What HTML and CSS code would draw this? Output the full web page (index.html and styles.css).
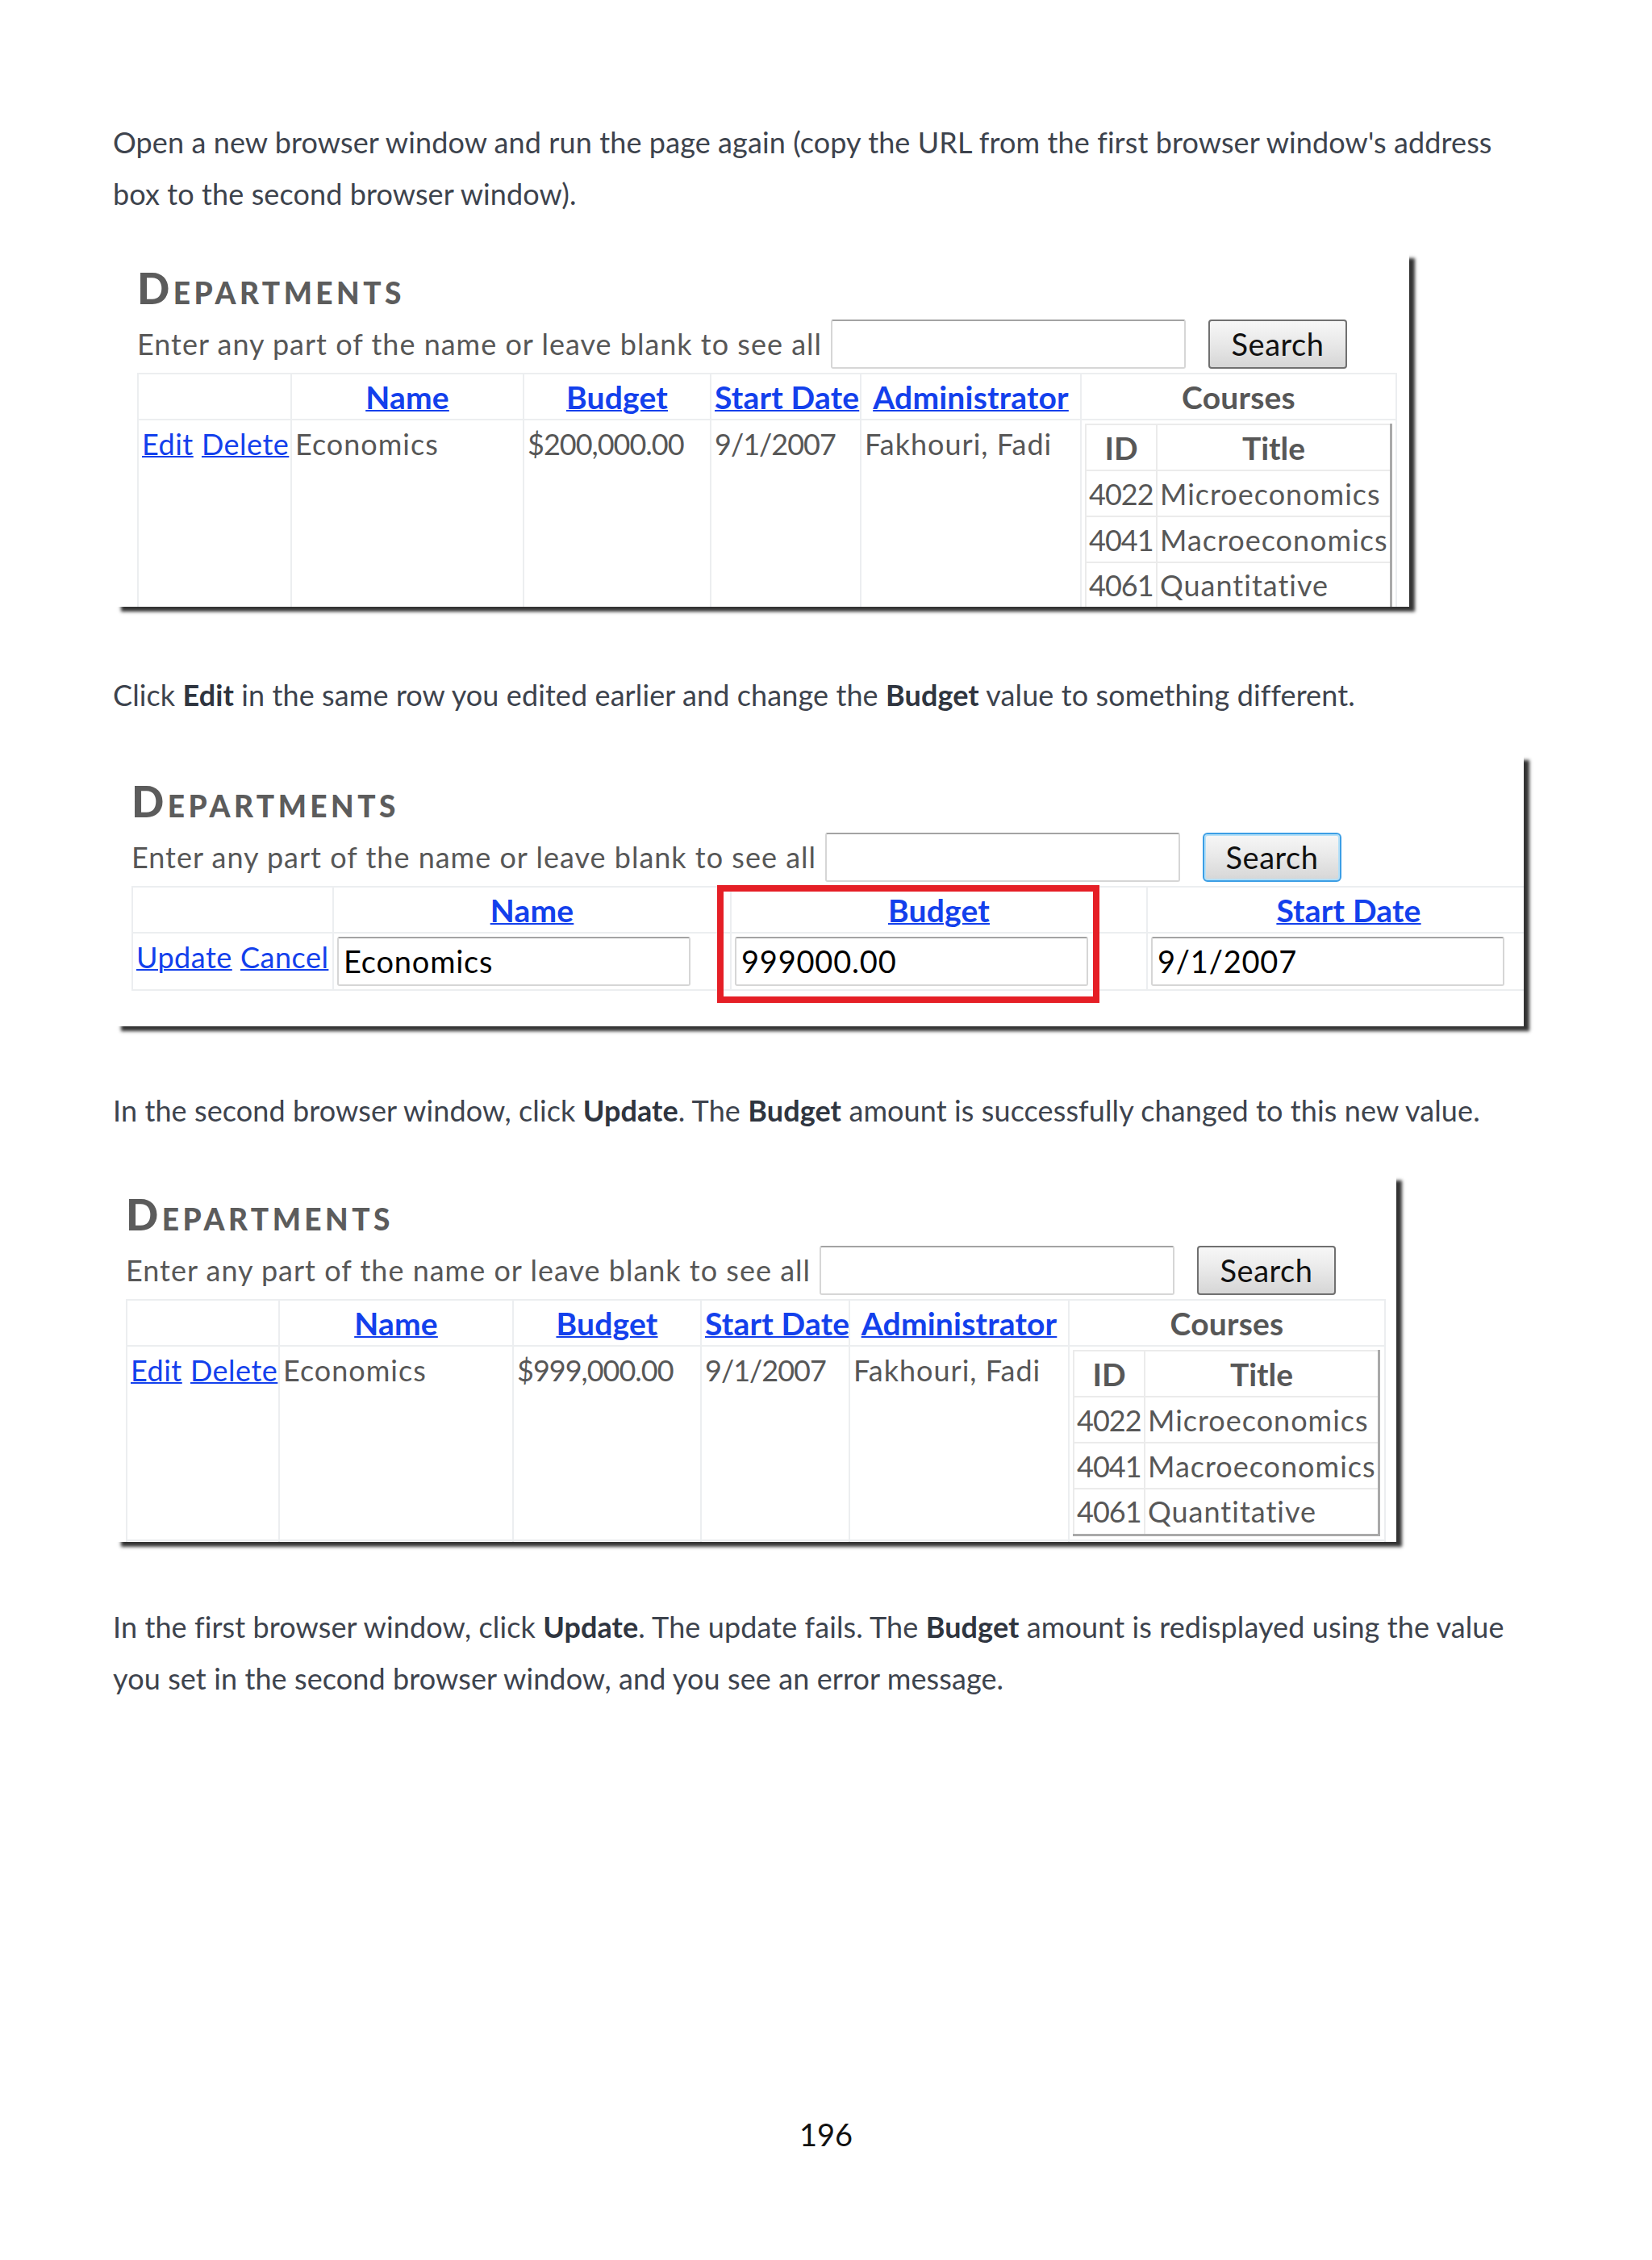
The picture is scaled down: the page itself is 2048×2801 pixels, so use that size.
FILE: index.html
```html
<!DOCTYPE html>
<html lang="en">

<head>
    <meta charset="UTF-8">
    <title>Departments - concurrency walkthrough</title>
    <link rel="stylesheet" href="styles.css">
</head>

<body>
    <main class="content">
        <p class="para">Open a new browser window and run the page again (copy the URL from the first browser window's address<br>box to the second browser window).</p>

        <div class="shot shot-1">
            <h2 class="dept">Departments</h2>
            <div class="search">
                <span class="search-label">Enter any part of the name or leave blank to see all</span>
                <span class="search-box"></span>
                <span class="search-btn">Search</span>
            </div>
            <table class="grid">
                <colgroup>
                    <col style="width:190px"><col style="width:288px"><col style="width:232px">
                    <col style="width:186px"><col style="width:273px"><col style="width:391px">
                </colgroup>
                <tr class="head">
                    <th></th>
                    <th><a href="#">Name</a></th>
                    <th><a href="#">Budget</a></th>
                    <th><a href="#">Start Date</a></th>
                    <th><a href="#">Administrator</a></th>
                    <th>Courses</th>
                </tr>
                <tr>
                    <td><a href="#">Edit</a> <a href="#">Delete</a></td>
                    <td>Economics</td>
                    <td class="num">$200,000.00</td>
                    <td class="num">9/1/2007</td>
                    <td>Fakhouri, Fadi</td>
                    <td>
                        <table class="courses">
                            <colgroup><col style="width:88px"><col></colgroup>
                            <tr><th>ID</th><th>Title</th></tr>
                            <tr><td class="num">4022</td><td>Microeconomics</td></tr>
                            <tr><td class="num">4041</td><td>Macroeconomics</td></tr>
                            <tr><td class="num">4061</td><td>Quantitative</td></tr>
                        </table>
                    </td>
                </tr>
            </table>
        </div>

        <p class="para">Click <b>Edit</b> in the same row you edited earlier and change the <b>Budget</b> value to something different.</p>

        <div class="shot shot-2">
            <h2 class="dept">Departments</h2>
            <div class="search">
                <span class="search-label">Enter any part of the name or leave blank to see all</span>
                <span class="search-box"></span>
                <span class="search-btn is-focused">Search</span>
            </div>
            <table class="grid">
                <colgroup>
                    <col style="width:249px"><col style="width:493px"><col style="width:516px"><col style="width:500px">
                </colgroup>
                <tr class="head">
                    <th></th>
                    <th><a href="#">Name</a></th>
                    <th><a href="#">Budget</a></th>
                    <th><a href="#">Start Date</a></th>
                </tr>
                <tr>
                    <td class="actions"><a href="#">Update</a> <a href="#">Cancel</a></td>
                    <td><span class="field">Economics</span></td>
                    <td><span class="field">999000.00</span></td>
                    <td><span class="field">9/1/2007</span></td>
                </tr>
            </table>
            <div class="callout"></div>
        </div>

        <p class="para">In the second browser window, click <b>Update</b>. The <b>Budget</b> amount is successfully changed to this new value.</p>

        <div class="shot shot-3">
            <h2 class="dept">Departments</h2>
            <div class="search">
                <span class="search-label">Enter any part of the name or leave blank to see all</span>
                <span class="search-box"></span>
                <span class="search-btn">Search</span>
            </div>
            <table class="grid">
                <colgroup>
                    <col style="width:189px"><col style="width:290px"><col style="width:233px">
                    <col style="width:184px"><col style="width:272px"><col style="width:392px">
                </colgroup>
                <tr class="head">
                    <th></th>
                    <th><a href="#">Name</a></th>
                    <th><a href="#">Budget</a></th>
                    <th><a href="#">Start Date</a></th>
                    <th><a href="#">Administrator</a></th>
                    <th>Courses</th>
                </tr>
                <tr>
                    <td><a href="#">Edit</a> <a href="#">Delete</a></td>
                    <td>Economics</td>
                    <td class="num">$999,000.00</td>
                    <td class="num">9/1/2007</td>
                    <td>Fakhouri, Fadi</td>
                    <td>
                        <table class="courses">
                            <colgroup><col style="width:88px"><col></colgroup>
                            <tr><th>ID</th><th>Title</th></tr>
                            <tr><td class="num">4022</td><td>Microeconomics</td></tr>
                            <tr><td class="num">4041</td><td>Macroeconomics</td></tr>
                            <tr><td class="num">4061</td><td>Quantitative</td></tr>
                        </table>
                    </td>
                </tr>
                <tr class="cut">
                    <td></td><td></td><td></td><td></td><td></td><td></td>
                </tr>
            </table>
        </div>

        <p class="para">In the first browser window, click <b>Update</b>. The update fails. The <b>Budget</b> amount is redisplayed using the value<br>you set in the second browser window, and you see an error message.</p>
    </main>

    <footer class="page-num">196</footer>
</body>

</html>
```

FILE: styles.css
```css
body {
    margin: 0;
    background: #fff;
    font-family: Lato, "Open Sans", sans-serif;
}

.content {
    padding: 144px 0 0 140px;
}

.para {
    margin: 0;
    font-size: 36px;
    line-height: 64px;
    letter-spacing: 0.1px;
    color: #3d434d;
}

.para b {
    color: #2f353f;
}

/* screenshot frames */
.shot {
    position: relative;
    box-sizing: border-box;
    margin: 42px 0 77px 3px;
    background: #fff;
    overflow: hidden;
    box-shadow: 7px 6px 4px rgba(0, 0, 0, 0.8);
    color: #575757;
    letter-spacing: 1px;
}

.shot-1 {
    width: 1604px;
    height: 438px;
    padding: 13px 0 0 27px;
}

.shot-1 .grid {
    width: 1560px;
}

.shot-2 {
    width: 1746px;
    height: 336px;
    padding: 27px 0 0 20px;
    margin-top: 43px;
    margin-bottom: 72px;
}

.shot-2 .grid {
    width: 1758px;
}

.shot-3 {
    width: 1588px;
    height: 454px;
    padding: 18px 0 0 13px;
    margin-top: 49px;
    margin-bottom: 73px;
}

.shot-3 .grid {
    width: 1560px;
}

.dept {
    margin: 0 0 9px;
    font-size: 53px;
    line-height: 60px;
    font-weight: 900;
    font-variant: small-caps;
    letter-spacing: 4.5px;
    color: #5c5c5c;
}

.search {
    display: flex;
    align-items: center;
    height: 61px;
}

.search-label {
    font-size: 36px;
    line-height: 61px;
    margin-right: 11px;
    white-space: nowrap;
}

.search-box {
    box-sizing: border-box;
    width: 440px;
    height: 61px;
    border: 2px solid #d6d6d6;
    border-top-color: #a3a3a3;
    border-radius: 3px;
    background: #fff;
}

.search-btn {
    box-sizing: border-box;
    margin-left: 28px;
    width: 172px;
    height: 61px;
    border: 2px solid #707070;
    border-radius: 4px;
    background: linear-gradient(#f7f7f7, #e8e8e8 50%, #d6d6d6);
    color: #111;
    font-size: 38px;
    line-height: 57px;
    text-align: center;
    letter-spacing: 0.5px;
}

.search-btn.is-focused {
    border-color: #3c9ee5;
    border-radius: 6px;
    box-shadow: inset 0 0 0 2px #b4e0f8;
}

/* grid view */
.grid {
    margin-top: 5px;
    border-collapse: collapse;
    table-layout: fixed;
    border: 2px solid #e5e8eb;
}

.grid th,
.grid td {
    border: 2px solid #eceef0;
    padding: 4px;
    vertical-align: top;
    text-align: left;
    font-size: 36px;
    line-height: 50px;
    white-space: nowrap;
    overflow: hidden;
}

.grid td a {
    letter-spacing: 0.5px;
}

.grid .num {
    letter-spacing: -1px;
}

.grid .head {
    height: 57px;
}

.grid .head th {
    padding: 0 4px;
    vertical-align: middle;
    text-align: center;
    font-size: 39px;
    line-height: 48px;
    font-weight: 700;
    color: #575757;
    letter-spacing: 0.2px;
}

.grid a {
    color: #1340ec;
    text-decoration: underline;
    text-decoration-thickness: 2px;
}

.grid .cut {
    height: 50px;
}

.field {
    display: block;
    box-sizing: border-box;
    width: 438px;
    height: 61px;
    padding-left: 6px;
    border: 2px solid #d6d6d6;
    border-top-color: #a3a3a3;
    border-radius: 3px;
    color: #000;
    font-size: 38px;
    line-height: 57px;
    letter-spacing: 0.8px;
}

.callout {
    position: absolute;
    left: 746px;
    top: 161px;
    width: 474px;
    height: 146px;
    box-sizing: border-box;
    border: 8px solid #e51f26;
}

/* nested courses table */
.courses {
    width: 381px;
    border-collapse: collapse;
    table-layout: fixed;
    border: 2px solid #e2e2e2;
    border-right: 3px solid #a9a9a9;
    border-bottom: 3px solid #a9a9a9;
}

.courses tr {
    height: 57px;
}

.grid .courses th,
.grid .courses td {
    border: 2px solid #ebebeb;
    padding: 0 3px;
    vertical-align: middle;
    line-height: 50px;
}

.grid .courses th {
    text-align: center;
    font-size: 39px;
    font-weight: 700;
    letter-spacing: 0;
}

.page-num {
    margin-top: 501px;
    text-align: center;
    font-size: 38px;
    line-height: 64px;
    color: #111;
}
```
